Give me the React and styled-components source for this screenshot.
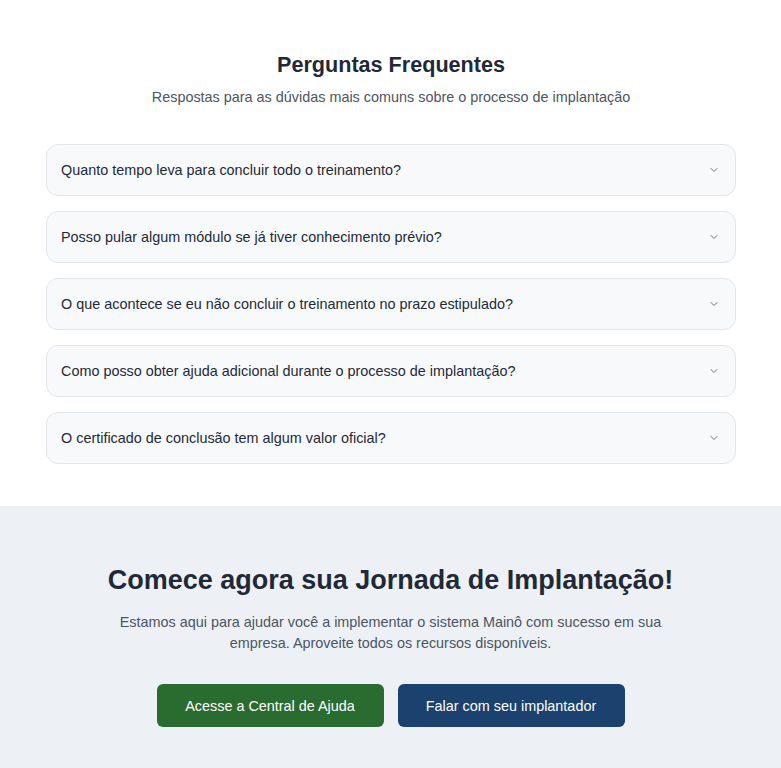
import React from 'react';
import styled, { createGlobalStyle } from 'styled-components';
import { ChevronDown } from 'lucide-react';

const GlobalStyle = createGlobalStyle`
  body {
    margin: 0;
    background: #ffffff;
    font-family: "Liberation Sans", Arial, sans-serif;
    color: #1f2937;
  }
`;

const faqItems = [
  "Quanto tempo leva para concluir todo o treinamento?",
  "Posso pular algum módulo se já tiver conhecimento prévio?",
  "O que acontece se eu não concluir o treinamento no prazo estipulado?",
  "Como posso obter ajuda adicional durante o processo de implantação?",
  "O certificado de conclusão tem algum valor oficial?",
];

const FaqSection = styled.section`
  padding: 51px 45px 42px 46px;
`;

const Title = styled.h2`
  margin: 0;
  text-align: center;
  font-size: 21.6px;
  line-height: 27px;
  font-weight: 700;
  color: #1f2937;
`;

const Subtitle = styled.p`
  margin: 9px 0 37px;
  text-align: center;
  font-size: 14.4px;
  line-height: 20px;
  color: #4b5563;
`;

const FaqList = styled.div`
  display: flex;
  flex-direction: column;
  gap: 15px;
`;

const FaqCard = styled.button`
  display: flex;
  align-items: center;
  justify-content: space-between;
  height: 52px;
  box-sizing: border-box;
  padding: 0 15px 0 14px;
  background: #f8f9fb;
  border: 1px solid #e3e6ea;
  border-radius: 12px;
  font-family: inherit;
  font-size: 14.4px;
  color: #1f2937;
  text-align: left;
  cursor: pointer;
`;

const Chevron = styled(ChevronDown)`
  color: #6b7280;
  flex-shrink: 0;
`;

const CtaSection = styled.section`
  background: #edf1f5;
  padding: 58px 46px 60px;
  text-align: center;
`;

const CtaTitle = styled.h2`
  margin: 0;
  font-size: 27px;
  line-height: 32px;
  font-weight: 700;
  color: #1f2937;
`;

const CtaText = styled.p`
  margin: 16px auto 30px;
  max-width: 560px;
  font-size: 14.4px;
  line-height: 21px;
  color: #4b5563;
`;

const Actions = styled.div`
  display: flex;
  justify-content: center;
  gap: 14px;
`;

const ActionButton = styled.a`
  display: inline-flex;
  align-items: center;
  justify-content: center;
  width: 227px;
  height: 43px;
  border-radius: 6px;
  background: ${(p) => (p.$variant === 'blue' ? '#1b426e' : '#2a6b30')};
  color: #ffffff;
  font-size: 14.4px;
  text-decoration: none;
  cursor: pointer;
`;

export default function App() {
  return (
    <>
      <GlobalStyle />
      <FaqSection>
        <Title>Perguntas Frequentes</Title>
        <Subtitle>Respostas para as dúvidas mais comuns sobre o processo de implantação</Subtitle>
        <FaqList>
          {faqItems.map((q, i) => (
            <FaqCard key={i}>
              <span>{q}</span>
              <Chevron size={12} strokeWidth={2} />
            </FaqCard>
          ))}
        </FaqList>
      </FaqSection>
      <CtaSection>
        <CtaTitle>Comece agora sua Jornada de Implantação!</CtaTitle>
        <CtaText>
          Estamos aqui para ajudar você a implementar o sistema Mainô com sucesso em sua empresa.
          Aproveite todos os recursos disponíveis.
        </CtaText>
        <Actions>
          <ActionButton>Acesse a Central de Ajuda</ActionButton>
          <ActionButton $variant="blue">Falar com seu implantador</ActionButton>
        </Actions>
      </CtaSection>
    </>
  );
}
